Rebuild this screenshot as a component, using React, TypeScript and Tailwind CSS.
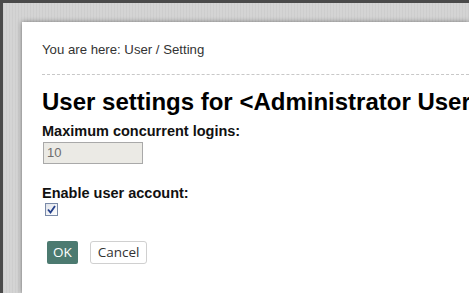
import React from "react";

export default function App() {
  return (
    <div className="w-[469px] h-[293px] overflow-hidden bg-[#4a4a4a] pt-[3px] pl-[3px]" style={{ fontFamily: '"Liberation Sans", Arial, sans-serif' }}>
      <div className="h-full bg-[#d4d4d4] bg-[repeating-linear-gradient(90deg,rgba(0,0,0,0.03)_0px,rgba(0,0,0,0.03)_1px,transparent_1px,transparent_3px)] pt-[19px] pl-[19px]">
        <div className="h-full bg-white shadow-[0_0_5px_rgba(0,0,0,0.45)] pt-[20px] pl-[20px] overflow-hidden">
          <div className="border-b border-dashed border-[#c8c8c8] pb-[16px] text-[13.2px] leading-[16px] text-[#333]">
            You are here: User / Setting
          </div>
          <h1 className="mt-[13px] text-[24px] leading-[28px] font-bold text-black whitespace-nowrap">
            User settings for &lt;Administrator User
          </h1>
          <div className="mt-[7px] text-[14.5px] leading-[16px] font-bold text-[#111]">Maximum concurrent logins:</div>
          <div className="mt-[3px] ml-[1px] w-[100px] h-[22px] border border-[#a9a9a9] bg-[#ebeae5] flex items-center pl-[3px] text-[13px] text-[#6d6d6d]">
            10
          </div>
          <div className="mt-[21px] text-[14.5px] leading-[16px] font-bold text-[#111]">Enable user account:</div>
          <div className="mt-[2px] ml-[3px] w-[13px] h-[13px] border border-[#7a8aa8] bg-gradient-to-br from-[#dfe3ea] to-white flex items-center justify-center">
            <svg width="9" height="9" viewBox="0 0 9 9">
              <path d="M1 4.5 L3.5 7.5 L8 1" stroke="#243f8a" strokeWidth="1.8" fill="none" />
            </svg>
          </div>
          <div className="mt-[25px] ml-[5px] flex gap-[12px]" style={{ fontFamily: '"Open Sans", sans-serif' }}>
            <button className="h-[23px] w-[31px] rounded-[2px] bg-[#4c7a70] text-white text-[13.5px] flex items-center justify-center">OK</button>
            <button className="h-[23px] w-[57px] rounded-[3px] border border-[#d0d0d0] bg-white text-[#333] text-[13.5px] flex items-center justify-center">Cancel</button>
          </div>
        </div>
      </div>
    </div>
  );
}
